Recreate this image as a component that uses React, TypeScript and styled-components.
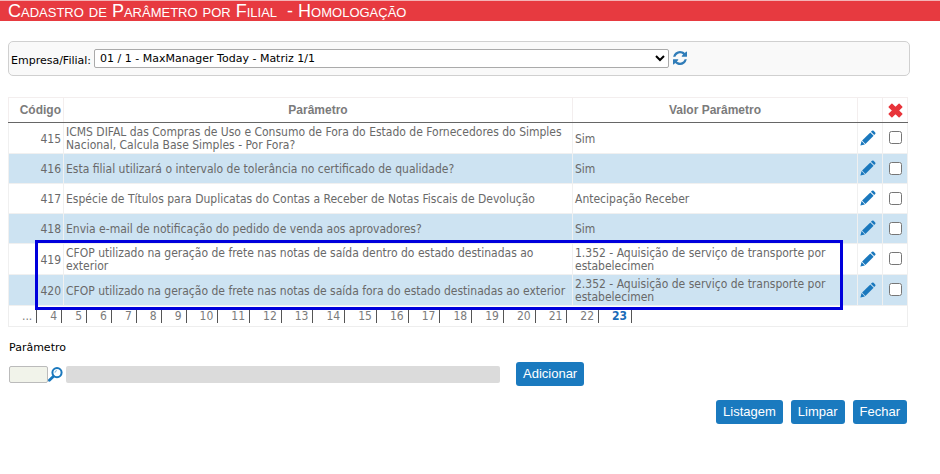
import React from "react";
import styled, { createGlobalStyle } from "styled-components";

const GlobalStyle = createGlobalStyle`
  body {
    margin: 0;
    background: #fff;
    color: #000;
    font: 11px/13px "DejaVu Sans", Verdana, sans-serif;
  }
  *, *::before, *::after { box-sizing: border-box; }
`;

const TitleBar = styled.h1`
  margin: 0;
  padding: 0 8px;
  height: 21px;
  border-top: 1px solid #f3b4b6;
  background: #e73a40;
  color: #fff;
  font: 18px/20px "Liberation Sans", Arial, sans-serif;
  font-variant: small-caps;
  white-space: pre;
`;

const Content = styled.main`
  margin: 20px 32px 0 8px;
`;

const FilterPanel = styled.div`
  display: flex;
  align-items: center;
  height: 35px;
  margin-right: -2px;
  padding: 0 2px;
  border: 1px solid #d0d0d0;
  border-radius: 5px;
  background: #f9f9f9;
`;

const FilterLabel = styled.label`
  flex: 0 0 83px;
  padding-top: 3px;
  white-space: nowrap;
`;

const BranchSelect = styled.select`
  flex: 0 1 575px;
  min-width: 0;
  height: 19px;
  padding: 0 0 0 1px;
  border: 1px solid #aaa;
  border-radius: 2px;
  background: #fff;
  color: #000;
  font: inherit;
`;

const IconButton = styled.button`
  display: inline-flex;
  padding: 0;
  border: 0;
  background: none;
  color: #1a78bd;
  vertical-align: middle;
  cursor: pointer;
`;

const RefreshButton = styled(IconButton)`
  margin-left: 4px;
  padding-bottom: 1px;
`;

const TableArea = styled.div`
  position: relative;
  margin-top: 21px;
`;

const ParamTable = styled.table`
  width: 100%;
  table-layout: fixed;
  border-collapse: collapse;
  border: 1px solid #eee;
  color: #696969;
  font: 12px/13px "DejaVu Sans Condensed", "DejaVu Sans", Verdana, sans-serif;
`;

const Column = styled.col<{ $width?: number }>`
  width: ${(p) => (p.$width ? `${p.$width}px` : "auto")};
`;

const HeadCell = styled.th<{ $align?: string }>`
  height: 25px;
  padding: 0 2px 1px;
  border: 1px solid #f3eeee;
  border-bottom: 1px solid #666;
  color: #7b7b7b;
  font: bold 12px/16px "Liberation Sans", Arial, sans-serif;
  text-align: ${(p) => p.$align ?? "center"};
`;

const Row = styled.tr`
  height: 30px;
  &:nth-child(even) { background: #cde3f2; }
`;

const Cell = styled.td<{ $align?: string }>`
  padding: 3px 2px 1px;
  border: 1px solid #f0f0f0;
  text-align: ${(p) => p.$align ?? "left"};
`;

const ControlCell = styled.td`
  padding: 0 3px 1px 2px;
  border: 1px solid #f0f0f0;
`;

const Check = styled.input`
  display: block;
  width: 13px;
  height: 13px;
  margin: 0 0 0 4px;
`;

const PagerCell = styled.td`
  height: 21px;
  padding: 0;
`;

const Pager = styled.nav`
  display: flex;
  padding-left: 13px;
`;

const PageLink = styled.a<{ $current?: boolean; $first?: boolean }>`
  margin-left: ${(p) => (p.$first ? 0 : 13)}px;
  padding-right: 4px;
  border-right: 1px solid #555;
  color: ${(p) => (p.$current ? "#1a6cb8" : "#7b7b7b")};
  font-weight: ${(p) => (p.$current ? "bold" : "normal")};
  text-decoration: none;
`;

const Highlight = styled.div`
  position: absolute;
  right: 65px;
  bottom: 17px;
  left: 27px;
  height: 70px;
  border: 3px solid #0000dc;
  pointer-events: none;
`;

const FieldLabel = styled.label`
  display: block;
  margin: 14px 0 8px;
  padding-left: 1px;
`;

const EntryRow = styled.div`
  display: flex;
  align-items: center;
  padding-left: 1px;
`;

const CodeInput = styled.input`
  width: 39px;
  height: 17px;
  border: 1px solid #bbb;
  border-radius: 2px;
  background: #f1f3ea;
  font: inherit;
`;

const NameInput = styled.input`
  flex: 0 1 434px;
  min-width: 0;
  height: 17px;
  margin: 0 16px 0 3px;
  border: 0;
  border-radius: 2px;
  background: #dbdbdb;
  font: inherit;
`;

const ActionButton = styled.button`
  height: 24px;
  padding: 0 7px;
  border: 0;
  border-radius: 3px;
  background: #1a7abf;
  color: #fff;
  font: 13px/24px "Liberation Sans", Arial, sans-serif;
  cursor: pointer;
`;

const Actions = styled.div`
  display: flex;
  justify-content: flex-end;
  gap: 8px;
  margin: 14px 1px 0 0;
`;

const rows = [
  { code: 415, name: "ICMS DIFAL das Compras de Uso e Consumo de Fora do Estado de Fornecedores do Simples Nacional, Calcula Base Simples - Por Fora?", value: "Sim" },
  { code: 416, name: "Esta filial utilizará o intervalo de tolerância no certificado de qualidade?", value: "Sim" },
  { code: 417, name: "Espécie de Títulos para Duplicatas do Contas a Receber de Notas Fiscais de Devolução", value: "Antecipação Receber" },
  { code: 418, name: "Envia e-mail de notificação do pedido de venda aos aprovadores?", value: "Sim" },
  { code: 419, name: "CFOP utilizado na geração de frete nas notas de saída dentro do estado destinadas ao exterior", value: "1.352 - Aquisição de serviço de transporte por estabelecimen" },
  { code: 420, name: "CFOP utilizado na geração de frete nas notas de saída fora do estado destinadas ao exterior", value: "2.352 - Aquisição de serviço de transporte por estabelecimen" },
];

const pages = Array.from({ length: 20 }, (_, i) => i + 4);

const SearchIcon = () => (
  <svg width="15" height="15" viewBox="0 0 15 15" fill="none" stroke="#1a78bd">
    <circle cx="9" cy="5.6" r="4.6" strokeWidth="2" />
    <path d="M7 5.8a2 2 0 0 1 2-2.2" strokeWidth="1" opacity=".5" />
    <path d="M5.3 9.4 1.4 13.2" strokeWidth="2.8" strokeLinecap="round" />
  </svg>
);

const PencilIcon = () => (
  <svg width="16" height="16" viewBox="0 0 16 16" fill="#1a78bd">
    <path d="M10.9 1.8 12 .8q.8-.7 1.6 0l1.6 1.6q.7.8 0 1.6L14.2 5.1z" />
    <path d="M10.3 2.4 13.6 5.7 5.4 13.9 2.1 10.6z" />
    <path d="M1.6 11.1 4.9 14.4 .4 15.6z" />
  </svg>
);

const RefreshIcon = () => (
  <svg width="14" height="14" viewBox="0 0 1536 1536" fill="#2f7cb8">
    <path d="M1511 928q0 5-1 7-64 268-268 434.500T764 1536q-146 0-282.500-55T238 1324l-129 129q-19 19-45 19t-45-19-19-45V960q0-26 19-45t45-19h448q26 0 45 19t19 45-19 45l-137 137q71 66 161 102t187 36q134 0 250-65t186-179q11-17 53-117 8-23 30-23h192q13 0 22.500 9.500t9.500 22.500zm25-800v448q0 26-19 45t-45 19h-448q-26 0-45-19t-19-45 19-45l138-138Q969 256 768 256q-134 0-250 65T332 500q-11 17-53 117-8 23-30 23H50q-13 0-22.500-9.500T18 608v-7q65-268 270-434.500T768 0q146 0 284 55.500T1297 212l130-129q19-19 45-19t45 19 19 45z" />
  </svg>
);

const DeleteIcon = () => (
  <svg width="15" height="15" viewBox="0 0 15 15" fill="#e8343a" stroke="#e8343a" strokeWidth="1.4" strokeLinejoin="round">
    <path d="M3.9 1.2 7.5 4.8 11.1 1.2 13.8 3.9 10.2 7.5 13.8 11.1 11.1 13.8 7.5 10.2 3.9 13.8 1.2 11.1 4.8 7.500 1.2 3.9z" />
  </svg>
);

export default function App() {
  return (
    <>
      <GlobalStyle />
      <TitleBar>{"Cadastro de Parâmetro por Filial \u00a0- Homologação"}</TitleBar>
      <Content>
        <FilterPanel>
          <FilterLabel htmlFor="branch">Empresa/Filial:</FilterLabel>
          <BranchSelect id="branch">
            <option>01 / 1 - MaxManager Today - Matriz 1/1</option>
          </BranchSelect>
          <RefreshButton aria-label="Atualizar"><RefreshIcon /></RefreshButton>
        </FilterPanel>

        <TableArea>
          <ParamTable>
            <colgroup>
              <Column $width={55} />
              <Column />
              <Column $width={285} />
              <Column $width={25} />
              <Column $width={25} />
            </colgroup>
            <thead>
              <tr>
                <HeadCell $align="right">Código</HeadCell>
                <HeadCell>Parâmetro</HeadCell>
                <HeadCell>Valor Parâmetro</HeadCell>
                <HeadCell />
                <HeadCell>
                  <IconButton aria-label="Excluir"><DeleteIcon /></IconButton>
                </HeadCell>
              </tr>
            </thead>
            <tbody>
              {rows.map((r) => (
                <Row key={r.code}>
                  <Cell $align="right">{r.code}</Cell>
                  <Cell>{r.name}</Cell>
                  <Cell>{r.value}</Cell>
                  <ControlCell>
                    <IconButton aria-label={`Editar ${r.code}`}><PencilIcon /></IconButton>
                  </ControlCell>
                  <ControlCell><Check type="checkbox" aria-label={`Selecionar ${r.code}`} /></ControlCell>
                </Row>
              ))}
            </tbody>
            <tfoot>
              <tr>
                <PagerCell colSpan={5}>
                  <Pager aria-label="Páginas">
                    <PageLink href="#" $first>...</PageLink>
                    {pages.map((n) => (
                      <PageLink key={n} href="#" $current={n === 23}>{n}</PageLink>
                    ))}
                  </Pager>
                </PagerCell>
              </tr>
            </tfoot>
          </ParamTable>
          <Highlight />
        </TableArea>

        <FieldLabel htmlFor="code">Parâmetro</FieldLabel>
        <EntryRow>
          <CodeInput id="code" type="text" />
          <IconButton aria-label="Pesquisar"><SearchIcon /></IconButton>
          <NameInput type="text" readOnly aria-label="Descrição" />
          <ActionButton>Adicionar</ActionButton>
        </EntryRow>
        <Actions>
          <ActionButton>Listagem</ActionButton>
          <ActionButton>Limpar</ActionButton>
          <ActionButton>Fechar</ActionButton>
        </Actions>
      </Content>
    </>
  );
}
